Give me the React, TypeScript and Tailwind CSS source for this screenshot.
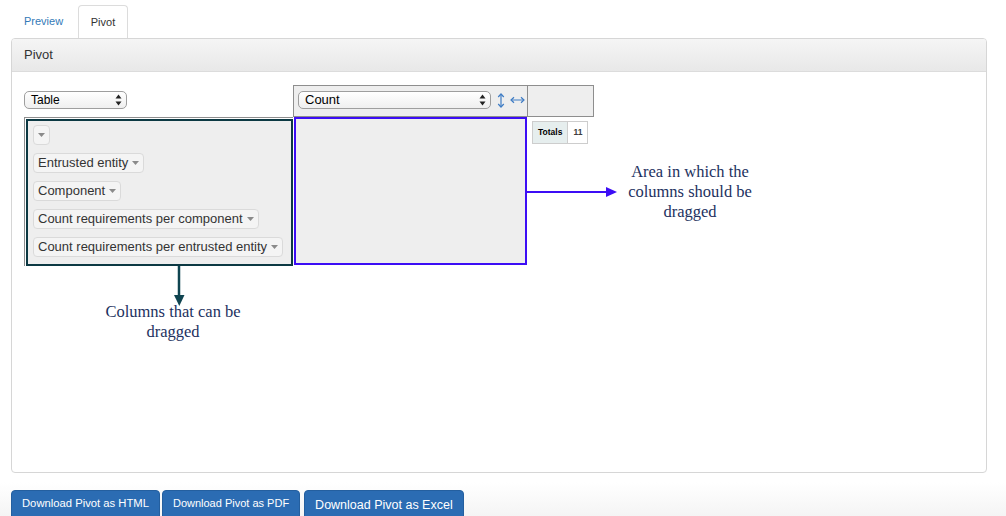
import React from 'react';

const SelectArrows = () => (
  <svg width="7" height="12" viewBox="0 0 7 12" className="shrink-0">
    <path d="M3.5 0.5 L6.5 4.5 L0.5 4.5 Z" fill="#222" />
    <path d="M3.5 11.5 L6.5 7.5 L0.5 7.5 Z" fill="#222" />
  </svg>
);

const FakeSelect = ({ label, width, size }: { label: string; width: string; size: string }) => {
  return (
    <div
      className={`flex h-[18px] items-center justify-between rounded-[5px] border border-[#9e9e9e] bg-gradient-to-b from-white to-[#efefef] pl-[6px] pr-[4px] text-black ${width} ${size}`}
    >
      <span className="leading-[16px]">{label}</span>
      <SelectArrows />
    </div>
  );
};

const Caret = () => (
  <svg width="7" height="4" viewBox="0 0 7 4" className="shrink-0">
    <path d="M0 0 L7 0 L3.5 4 Z" fill="#8a8a8a" />
  </svg>
);

const AttrPill = ({ name }: { name?: string }) => {
  return (
    <div className="flex h-[20px] items-center gap-[4px] rounded-[4px] border border-[#dadada] bg-[#f4f4f4] px-[4px] text-[13px] leading-[16px] text-[#333]">
      {name && <span>{name}</span>}
      <Caret />
    </div>
  );
};

const attrs = [
  'Entrusted entity',
  'Component',
  'Count requirements per component',
  'Count requirements per entrusted entity',
];

export default function App() {
  return (
    <div className="relative flex h-[516px] w-full flex-col overflow-hidden bg-white font-['Liberation_Sans',Arial,sans-serif] text-[#333]">
      <div className="pl-[11px] pt-[5px]">
        {/* tabs */}
        <div className="flex h-[33px] text-[11px]">
          <div className="flex w-[65px] items-center pl-[13px] text-[#337ab7]">Preview</div>
          <div className="ml-[2px] flex w-[50px] items-center justify-center rounded-t-[4px] border border-b-0 border-[#dcdcdc] bg-white">
            Pivot
          </div>
        </div>

        {/* panel */}
        <div className="h-[435px] w-[976px] overflow-hidden rounded-[4px] border border-[#d6d6d6] bg-white">
          <div className="flex h-[33px] items-center border-b border-[#dcdcdc] bg-gradient-to-b from-[#f5f5f5] to-[#e8e8e8] pl-[12px] text-[13px]">
            Pivot
          </div>

          <div className="pl-[12px] pt-[13px]">
            {/* pivot row 1 */}
            <div className="flex h-[32px]">
              <div className="flex w-[269px] items-center pb-[3px]">
                <FakeSelect label="Table" width="w-[103px]" size="text-[12px]" />
              </div>
              <div className="flex w-[235px] items-center gap-[6px] border border-[#8e8e8e] bg-[#eee] pb-[2px] pl-[4px]">
                <FakeSelect label="Count" width="w-[193px]" size="text-[13px]" />
                <svg width="8" height="15" viewBox="0 0 8 15" className="shrink-0">
                  <path d="M4 1.5 V13.5" stroke="#3f7cc4" strokeWidth="1.2" />
                  <path d="M1.2 4 L4 1 L6.8 4" fill="none" stroke="#3f7cc4" strokeWidth="1.2" />
                  <path d="M1.2 11 L4 14 L6.8 11" fill="none" stroke="#3f7cc4" strokeWidth="1.2" />
                </svg>
                <svg width="15" height="8" viewBox="0 0 15 8" className="-ml-[1px] shrink-0">
                  <path d="M1.5 4 H13.5" stroke="#3f7cc4" strokeWidth="1.2" />
                  <path d="M4 1.2 L1 4 L4 6.8" fill="none" stroke="#3f7cc4" strokeWidth="1.2" />
                  <path d="M11 1.2 L14 4 L11 6.8" fill="none" stroke="#3f7cc4" strokeWidth="1.2" />
                </svg>
              </div>
              <div className="w-[66px] border-y border-r border-[#8e8e8e] bg-[#eee]" />
            </div>

            {/* pivot row 2 */}
            <div className="flex">
              <div className="w-[269px] border-l border-t border-[#8e8e8e] pl-px pt-px">
                <div className="flex h-[147px] w-[267px] flex-col items-start gap-[8px] border-2 border-[#0c3943] bg-[#eee] pl-[5px] pt-[4px]">
                  <AttrPill />
                  {attrs.map((a) => (
                    <AttrPill key={a} name={a} />
                  ))}
                </div>
              </div>
              <div className="pl-px">
                <div className="h-[148px] w-[233px] border-2 border-[#3c0df5] bg-[#eee]" />
              </div>
              <div className="pl-[5px] pt-[4px]">
                <div className="flex text-[8.5px] font-bold leading-[11px]">
                  <div className="border border-[#cdcdcd] bg-[#e6eeee] p-[5px] text-black">Totals</div>
                  <div className="border-y border-r border-[#cdcdcd] bg-white p-[5px] text-[#3d3d3d]">11</div>
                </div>
              </div>
            </div>
          </div>
        </div>
      </div>

      {/* footer with export buttons */}
      <div className="flex-1 bg-gradient-to-b from-white from-20% to-[#f3f3f3] pl-[11px] pt-[17px]">
        <div className="flex items-start text-white">
          <div className="h-[30px] rounded-[4px] border border-[#245f9f] bg-[#2b6cb3] px-[10px] pt-[6px] text-[11.25px] leading-[13px]">
            Download Pivot as HTML
          </div>
          <div className="ml-[2px] h-[30px] rounded-[4px] border border-[#245f9f] bg-[#2b6cb3] px-[10px] pt-[6px] text-[11px] leading-[13px]">
            Download Pivot as PDF
          </div>
          <div className="ml-[4px] h-[30px] rounded-[4px] border border-[#245f9f] bg-[#2b6cb3] px-[10px] pt-[7px] text-[12.5px] leading-[14px]">
            Download Pivot as Excel
          </div>
        </div>
      </div>

      {/* annotation overlay */}
      <svg className="pointer-events-none absolute left-0 top-0" width="1006" height="516">
        <path d="M527 192 H607" stroke="#3c0df5" strokeWidth="2" />
        <path d="M606 187 L617 192 L606 197 Z" fill="#3c0df5" />
        <path d="M179 266 V297" stroke="#0f4450" strokeWidth="2.5" />
        <path d="M174 295 L179.3 306 L184.5 295 Z" fill="#0f4450" />
      </svg>
      <div className="pointer-events-none absolute left-[590px] top-[162px] w-[200px] text-center font-['Liberation_Serif','Times_New_Roman',serif] text-[16.5px] leading-[20px] text-[#1d3160]">
        Area in which the
        <br />
        columns should be
        <br />
        dragged
      </div>
      <div className="pointer-events-none absolute left-[73px] top-[302px] w-[200px] text-center font-['Liberation_Serif','Times_New_Roman',serif] text-[16.5px] leading-[20px] text-[#1d3160]">
        Columns that can be
        <br />
        dragged
      </div>
    </div>
  );
}
